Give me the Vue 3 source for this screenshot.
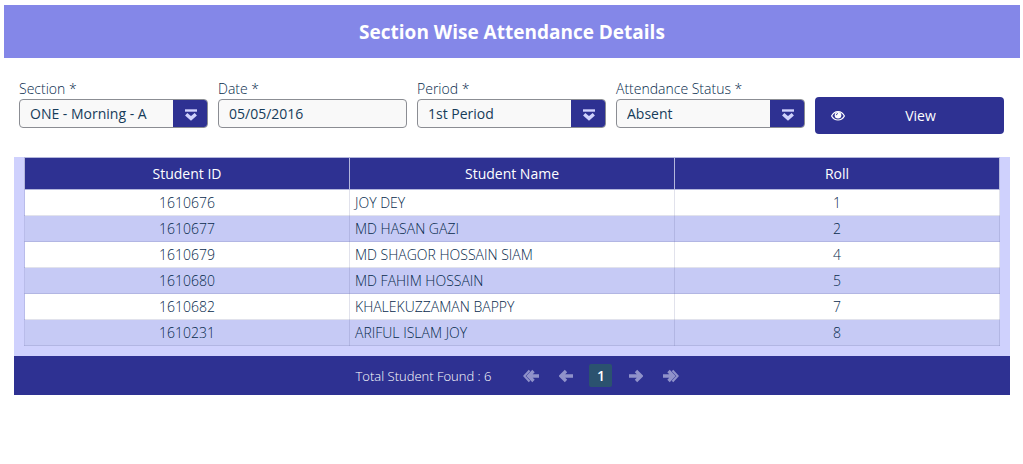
<script setup>
import { ref } from 'vue'

const fields = ref([
  { id: 'section', label: 'Section *', type: 'select', value: 'ONE - Morning - A' },
  { id: 'date', label: 'Date *', type: 'text', value: '05/05/2016' },
  { id: 'period', label: 'Period *', type: 'select', value: '1st Period' },
  { id: 'status', label: 'Attendance Status *', type: 'select', value: 'Absent' }
])

const students = [
  { id: '1610676', name: 'JOY DEY', roll: 1 },
  { id: '1610677', name: 'MD HASAN GAZI', roll: 2 },
  { id: '1610679', name: 'MD SHAGOR HOSSAIN SIAM', roll: 4 },
  { id: '1610680', name: 'MD FAHIM HOSSAIN', roll: 5 },
  { id: '1610682', name: 'KHALEKUZZAMAN BAPPY', roll: 7 },
  { id: '1610231', name: 'ARIFUL ISLAM JOY', roll: 8 }
]
</script>

<template>
  <main class="page">
    <h1 class="title">Section Wise Attendance Details</h1>

    <form class="filters" @submit.prevent>
      <div v-for="field in fields" :key="field.id" class="field">
        <label :for="field.id">{{ field.label }}</label>
        <div v-if="field.type === 'select'" class="select-box">
          <select :id="field.id" v-model="field.value" class="control">
            <option>{{ field.value }}</option>
          </select>
          <span class="trigger">
            <svg width="12" height="12" viewBox="0 0 12 12" aria-hidden="true">
              <path d="M0 1.5H12" stroke-width="2.4" />
              <path d="M1.2 5.2L6 9.4L10.8 5.2" stroke-width="3.4" />
            </svg>
          </span>
        </div>
        <input v-else :id="field.id" v-model="field.value" class="control" type="text" />
      </div>
      <button class="view" type="submit">
        <svg width="14" height="12" viewBox="0 0 14 12" aria-hidden="true">
          <path d="M.6 6C3.5 .1 10.5 .1 13.4 6C10.5 11.3 3.5 11.3 .6 6Z" fill="none" stroke="#fff" stroke-width="1.2" />
          <circle cx="7" cy="5.2" r="3.3" fill="#fff" />
          <path d="M5.3 5.2Q5.3 3.6 7 3.5" fill="none" stroke="#2e3192" stroke-width=".8" />
        </svg>
        <span>View</span>
      </button>
    </form>

    <section class="results">
      <div class="table-wrap">
        <table>
          <thead>
            <tr>
              <th scope="col">Student ID</th>
              <th scope="col">Student Name</th>
              <th scope="col">Roll</th>
            </tr>
          </thead>
          <tbody>
            <tr v-for="student in students" :key="student.id">
              <td>{{ student.id }}</td>
              <td class="name">{{ student.name }}</td>
              <td>{{ student.roll }}</td>
            </tr>
          </tbody>
        </table>
      </div>
      <footer class="pager">
        <span class="total">Total Student Found : 6</span>
        <nav class="pages" aria-label="Pages">
          <button type="button" aria-label="First page">
            <svg width="16" height="14" viewBox="0 0 16 14" aria-hidden="true">
              <path d="M6.5 1.5L1.3 7L6.5 12.5" stroke-width="2" />
              <path d="M10.5 2L5.6 7L10.5 12M7 7H16" stroke-width="3.4" />
            </svg>
          </button>
          <button type="button" aria-label="Previous page">
            <svg width="14" height="14" viewBox="0 0 14 14" aria-hidden="true">
              <path d="M7 2L2 7L7 12M3 7H14" stroke-width="3.4" />
            </svg>
          </button>
          <button class="current" type="button" aria-current="page">1</button>
          <button type="button" aria-label="Next page">
            <svg width="14" height="14" viewBox="0 0 14 14" aria-hidden="true">
              <path d="M7 2L12 7L7 12M11 7H0" stroke-width="3.4" />
            </svg>
          </button>
          <button type="button" aria-label="Last page">
            <svg width="16" height="14" viewBox="0 0 16 14" aria-hidden="true">
              <path d="M9.5 1.5L14.7 7L9.5 12.5" stroke-width="2" />
              <path d="M5.5 2L10.4 7L5.5 12M9 7H0" stroke-width="3.4" />
            </svg>
          </button>
        </nav>
      </footer>
    </section>
  </main>
</template>

<style>
body {
  background: #fff;
}
</style>

<style scoped>
.page {
  padding: 5px 3px 0 4px;
  font-family: "Open Sans", "Noto Sans", sans-serif;
  font-size: 14px;
  line-height: 20px;
  color: #062a4c;
}

.page *,
.page {
  box-sizing: border-box;
}

.title {
  margin: 0;
  padding: 13px 12px 11px;
  background: #8487e8;
  color: #fff;
  font-size: 19px;
  font-weight: 700;
  line-height: 29px;
  text-align: center;
}

.filters {
  display: grid;
  grid-template-columns: repeat(5, 1fr);
  gap: 10px;
  align-items: end;
  padding: 21px 16px 23px 15px;
}

.field {
  display: flex;
  flex-direction: column;
  padding-bottom: 6px;
}

.field label {
  font-weight: 350;
}

.control {
  width: 100%;
  height: 29px;
  margin: 0;
  padding: 0 10px;
  appearance: none;
  border: 1px solid #8b8d93;
  border-radius: 4px;
  background: #f9f9f9;
  color: #163c5a;
  font: 500 14px "Open Sans", "Noto Sans", sans-serif;
}

.select-box {
  display: flex;
  position: relative;
}

.trigger {
  position: absolute;
  top: 1px;
  right: 1px;
  bottom: 1px;
  width: 34px;
  display: flex;
  align-items: center;
  justify-content: center;
  padding: 2px 0 0 2px;
  border-radius: 0 3px 3px 0;
  background: #2e3192;
  pointer-events: none;
}

.trigger svg {
  fill: none;
  stroke: #d0d2fc;
}

.view {
  display: flex;
  align-items: center;
  height: 37px;
  padding: 0 16px;
  border: 0;
  border-radius: 4px;
  background: #2e3192;
  color: #fff;
  font: inherit;
}

.view span {
  flex: 1;
  padding-left: 8px;
}

.results {
  margin: 0 10px;
}

.table-wrap {
  padding: 0 10px 10px;
  background: #cfd1fd;
}

table {
  width: 100%;
  table-layout: fixed;
  border-collapse: collapse;
}

th {
  height: 32px;
  padding: 0 5px;
  border: 1px solid #b3b6dc;
  background: #2e3192;
  color: #fff;
  font-weight: 500;
}

td {
  height: 26px;
  padding: 0 5px;
  border: 1px solid rgba(90, 95, 150, 0.18);
  font-weight: 350;
  text-align: center;
}

tbody tr {
  background: #fff;
}

tbody tr:nth-child(even) {
  background: #c6caf5;
}

.name {
  text-align: left;
}

.pager {
  display: flex;
  align-items: center;
  justify-content: center;
  gap: 28px;
  height: 39px;
  padding-left: 14px;
  background: #2e3192;
  color: #fff;
}

.total {
  font-size: 13px;
  font-weight: 300;
}

.pages {
  display: flex;
  align-items: center;
  gap: 12px;
}

.pages button {
  display: flex;
  align-items: center;
  justify-content: center;
  width: 23px;
  height: 23px;
  padding: 0;
  border: 0;
  border-radius: 2px;
  background: none;
  color: #fff;
  font: 600 14px "Open Sans", "Noto Sans", sans-serif;
}

.pages .current {
  background: #2b526f;
}

.pages svg {
  fill: none;
  stroke: #9092ca;
}
</style>
